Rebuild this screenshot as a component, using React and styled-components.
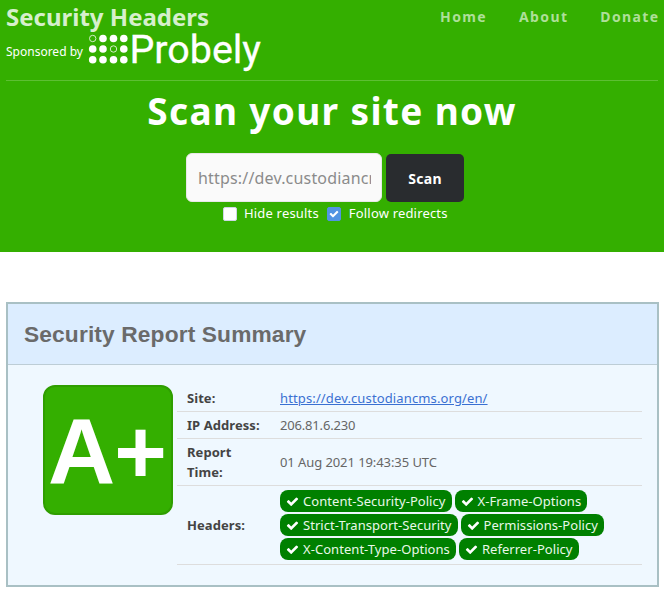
import React from "react";
import styled, { createGlobalStyle } from "styled-components";

const Global = createGlobalStyle`
  * { box-sizing: border-box; }
  body { margin: 0; background: #fff; color: #666; font: 13px/20px "Noto Sans", sans-serif; }
`;

const Hero = styled.header`
  height: 252px;
  padding: 0 6px;
  background: #34af00;
  color: #fff;
`;
const TopBar = styled.div`
  display: flex;
  justify-content: space-between;
  height: 81px;
  border-bottom: 1px solid #5dbf33;
`;
const Title = styled.div`
  height: 34px;
  font-size: 24px;
  line-height: 34px;
  font-weight: 700;
  color: #d6efcc;
`;
const Sponsor = styled.div`
  display: flex;
  height: 38px;
  font-size: 12px;
  line-height: 35px;
  svg { display: block; margin-left: 5px; overflow: visible; }
`;
const Nav = styled.nav`
  display: flex;
  gap: 32px;
  padding-top: 7px;
  font-size: 14px;
  line-height: 20px;
  font-weight: 700;
  letter-spacing: 1.37px;
  margin-right: -1.5px;
  color: #aedf99;
`;
const Heading = styled.h1`
  margin: 0;
  height: 72px;
  font-size: 37px;
  line-height: 59px;
  font-weight: 700;
  letter-spacing: 1.35px;
  text-align: center;
`;
const ScanForm = styled.div`
  display: flex;
  align-items: flex-end;
  gap: 4px;
  width: 278px;
  margin-left: 180px;
`;
const UrlInput = styled.input`
  width: 196px;
  height: 49px;
  padding: 0 10px 0 11px;
  border: 1px solid #e8e8e8;
  border-radius: 6px;
  background: #fafafa;
  font: 16px "Noto Sans", sans-serif;
  letter-spacing: 0.18px;
  &::placeholder { color: #8b8b8b; opacity: 1; }
`;
const ScanButton = styled.button`
  width: 78px;
  height: 48px;
  padding: 0;
  border: 0;
  border-radius: 5px;
  background: #292c2f;
  color: #fff;
  font: 700 14px "Noto Sans", sans-serif;
  letter-spacing: 0.3px;
`;
const Options = styled.div`
  display: flex;
  gap: 8px;
  margin: 1px 0 0 217px;
  letter-spacing: 0.18px;
`;
const Option = styled.label`
  display: flex;
  align-items: center;
  gap: ${(p) => p.$gap || 7}px;
`;
const Box = styled.span`
  display: flex;
  width: 14px;
  height: 14px;
  margin-top: 1px;
  border: 1px solid ${(p) => (p.$checked ? "#5294e2" : "#cfd6e6")};
  border-radius: 2px;
  background: ${(p) => (p.$checked ? "#5294e2" : "#fff")};
  svg { display: block; margin: 1px; }
`;
const Report = styled.section`
  height: 285px;
  margin: 50px 5px 0 6px;
  border: 2px solid #a9c0c4;
  background: #eff8ff;
`;
const ReportTitle = styled.h2`
  margin: 0;
  height: 61px;
  padding-left: 16px;
  border-bottom: 1px solid #bdcdd6;
  background: #dcedff;
  color: #6a6a6a;
  font: 700 22.75px/61px "Liberation Sans", sans-serif;
  letter-spacing: 0.13px;
`;
const ReportBody = styled.div`
  display: flex;
  gap: 4px;
  padding: 20px 15px 0 35px;
`;
const Score = styled.div`
  flex: none;
  width: 130px;
  height: 130px;
  padding-left: 3px;
  border: 2px solid #2f9e00;
  border-radius: 12px;
  background: #34af00;
  color: #fff;
  font-family: "Liberation Sans", sans-serif;
  font-size: 93px;
  line-height: 129px;
  font-weight: 700;
  letter-spacing: -1px;
  white-space: nowrap;
`;
const Plus = styled.span`
  font-size: 90px;
`;
const Facts = styled.div`
  flex: 1;
`;
const Fact = styled.div`
  display: grid;
  grid-template-columns: 93px 1fr;
  align-items: center;
  min-height: 27px;
  padding: 3px 0 3px 10px;
  border-bottom: 1px solid #ddd;
`;
const Label = styled.div`
  max-width: 76px;
  color: #444;
  font-weight: 700;
  letter-spacing: 0.06px;
`;
const Value = styled.span`
  letter-spacing: ${(p) => p.$spacing}px;
`;
const Link = styled.a`
  color: #3a70d2;
  letter-spacing: 0.13px;
  text-decoration: underline;
`;
const Pills = styled.div`
  display: flex;
  flex-wrap: wrap;
  gap: 2px 3px;
  max-width: 335px;
  padding: 1px 0 1px;
`;
const Pill = styled.span`
  display: flex;
  align-items: center;
  height: 22px;
  padding: 0 6px;
  border-radius: 8px;
  background: #008000;
  color: #e9f8e9;
  letter-spacing: 0.05px;
  svg { margin-right: 4px; }
`;

const CheckIcon = ({ size = 13 }) => (
  <svg width={size} height={size} viewBox="0 0 1792 1792" fill="#fff">
    <path d="M1671 566q0 40-28 68l-724 724-136 136q-28 28-68 28t-68-28l-136-136-362-362q-28-28-28-68t28-68l136-136q28-28 68-28t68 28l294 295 656-657q28-28 68-28t68 28l136 136q28 28 28 68z" />
  </svg>
);

const ProbelyLogo = () => (
  <svg width="176" height="40" viewBox="88 34 176 40">
    {[38.5, 49, 59.7].map((y, r) =>
      [92.7, 103, 113.5, 123.8].map((x, c) => {
        const hollow = (r === 0 && c === 0) || (r === 1 && c === 2);
        return (
          <circle key={`${r}${c}`} cx={x} cy={y} r={hollow ? 3.2 : 3.8}
            fill={hollow ? "none" : "#fff"} stroke={hollow ? "#e2f4da" : "none"} strokeWidth="0.9" />
        );
      })
    )}
    <text x="129.5" y="63" fill="#fff" stroke="#fff" strokeWidth="0.3" fontFamily="Roboto, sans-serif"
      fontSize="39" textLength="131.5" lengthAdjust="spacingAndGlyphs">Probely</text>
  </svg>
);

const headerRows = [
  "Content-Security-Policy", "X-Frame-Options", "Strict-Transport-Security",
  "Permissions-Policy", "X-Content-Type-Options", "Referrer-Policy",
];

export default function App() {
  return (
    <>
      <Global />
      <Hero>
        <TopBar>
          <div>
            <Title>Security Headers</Title>
            <Sponsor>Sponsored by <ProbelyLogo /></Sponsor>
          </div>
          <Nav><span>Home</span><span>About</span><span>Donate</span></Nav>
        </TopBar>
        <Heading>Scan your site now</Heading>
        <ScanForm>
          <UrlInput placeholder="https://dev.custodiancms.org" />
          <ScanButton>Scan</ScanButton>
        </ScanForm>
        <Options>
          <Option><Box />Hide results</Option>
          <Option $gap={8}><Box $checked><CheckIcon size={10} /></Box>Follow redirects</Option>
        </Options>
      </Hero>
      <Report>
        <ReportTitle>Security Report Summary</ReportTitle>
        <ReportBody>
          <Score>A<Plus>+</Plus></Score>
          <Facts>
            <Fact><Label>Site:</Label><Link>https://dev.custodiancms.org/en/</Link></Fact>
            <Fact><Label>IP Address:</Label><Value $spacing={-0.18}>206.81.6.230</Value></Fact>
            <Fact><Label>Report Time:</Label><Value $spacing={-0.08}>01 Aug 2021 19:43:35 UTC</Value></Fact>
            <Fact>
              <Label>Headers:</Label>
              <Pills>{headerRows.map((h) => <Pill key={h}><CheckIcon />{h}</Pill>)}</Pills>
            </Fact>
          </Facts>
        </ReportBody>
      </Report>
    </>
  );
}
